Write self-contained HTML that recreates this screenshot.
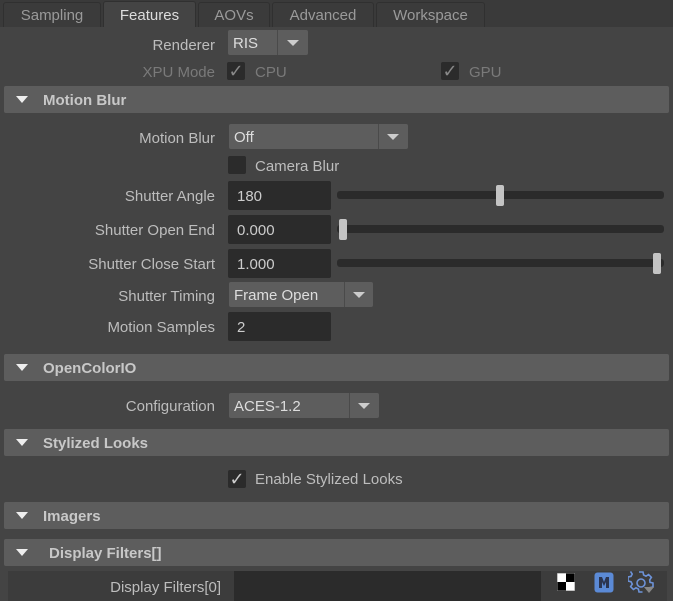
<!DOCTYPE html>
<html><head><style>
*{margin:0;padding:0;box-sizing:border-box}
body{width:673px;height:601px;background:#444;overflow:hidden;position:relative;font-family:"Liberation Sans",sans-serif;font-size:15px;color:#bdbdbd}
.a{position:absolute}
.tabbar{left:0;top:0;width:673px;height:27px;background:#3a3a3a}
.tab{position:absolute;top:2px;height:25px;background:#3b3b3b;border:1px solid #303030;border-bottom:none;border-radius:3px 3px 0 0;color:#9a9a9a;font-size:15px;text-align:center;line-height:26px}
.tab.on{background:#444;color:#ddd;top:1px;height:26px;line-height:28px}
.lbl{position:absolute;text-align:right;width:215px;left:0;line-height:18px}
.hdr{position:absolute;left:4px;width:665px;height:27px;background:#5d5d5d;border-radius:2px;font-weight:bold;color:#c8c8c8;line-height:29px;font-size:15px}
.hdr .t{position:absolute;left:12px;top:10px;width:0;height:0;border-left:6px solid transparent;border-right:6px solid transparent;border-top:7px solid #eee}
.hdr span{position:absolute;left:39px}
.dd{position:absolute;height:25px;background:#5d5d5d;border-radius:2px;line-height:27px;padding-left:5px;color:#ddd}
.dd .d{position:absolute;top:0;bottom:0;width:1px;background:#4a4a4a}
.dd .ar{position:absolute;top:10px;width:0;height:0;border-left:6px solid transparent;border-right:6px solid transparent;border-top:6px solid #ccc}
.fld{position:absolute;left:228px;width:103px;height:29px;background:#2b2b2b;border-radius:2px;line-height:32px;padding-left:9px;color:#ccc}
.cb{position:absolute;width:18px;height:18px;background:#2b2b2b;border-radius:2px;color:#ccc;font-size:18px;line-height:19px;text-align:center;font-family:"DejaVu Sans",sans-serif}
.trk{position:absolute;left:337px;width:327px;height:8px;background:#2b2b2b;border-radius:3px}
.hd{position:absolute;width:8px;height:21px;background:#c4c4c4;border-radius:2px}
</style></head><body>
<div class="a tabbar"></div>
<div class="tab" style="left:3px;width:98px">Sampling</div>
<div class="tab on" style="left:103px;width:93px">Features</div>
<div class="tab" style="left:198px;width:72px">AOVs</div>
<div class="tab" style="left:272px;width:102px">Advanced</div>
<div class="tab" style="left:376px;width:109px">Workspace</div>

<div class="lbl" style="top:37px">Renderer</div>
<div class="dd" style="left:228px;top:30px;width:80px">RIS<div class="d" style="left:49px"></div><div class="ar" style="left:59px"></div></div>
<div class="lbl" style="top:64px;color:#7a7a7a">XPU Mode</div>
<div class="cb" style="left:227px;top:62px;color:#888">✓</div><div class="a" style="left:255px;top:64px;color:#7a7a7a">CPU</div>
<div class="cb" style="left:441px;top:62px;color:#888">✓</div><div class="a" style="left:469px;top:64px;color:#7a7a7a">GPU</div>

<div class="hdr" style="top:86px"><div class="t"></div><span>Motion Blur</span></div>
<div class="lbl" style="top:130px">Motion Blur</div>
<div class="dd" style="left:229px;top:124px;width:179px">Off<div class="d" style="left:149px"></div><div class="ar" style="left:158px"></div></div>
<div class="cb" style="left:228px;top:156px"></div><div class="a" style="left:255px;top:158px">Camera Blur</div>
<div class="lbl" style="top:188px">Shutter Angle</div>
<div class="fld" style="top:181px">180</div><div class="trk" style="top:191px"></div><div class="hd" style="left:496px;top:185px"></div>
<div class="lbl" style="top:222px">Shutter Open End</div>
<div class="fld" style="top:215px">0.000</div><div class="trk" style="top:225px"></div><div class="hd" style="left:339px;top:219px"></div>
<div class="lbl" style="top:256px">Shutter Close Start</div>
<div class="fld" style="top:249px">1.000</div><div class="trk" style="top:259px"></div><div class="hd" style="left:653px;top:253px"></div>
<div class="lbl" style="top:288px">Shutter Timing</div>
<div class="dd" style="left:229px;top:282px;width:144px">Frame Open<div class="d" style="left:115px"></div><div class="ar" style="left:124px"></div></div>
<div class="lbl" style="top:319px">Motion Samples</div>
<div class="fld" style="top:312px">2</div>

<div class="hdr" style="top:354px"><div class="t"></div><span>OpenColorIO</span></div>
<div class="lbl" style="top:398px">Configuration</div>
<div class="dd" style="left:229px;top:393px;width:150px">ACES-1.2<div class="d" style="left:120px"></div><div class="ar" style="left:129px"></div></div>

<div class="hdr" style="top:429px"><div class="t"></div><span>Stylized Looks</span></div>
<div class="cb" style="left:228px;top:470px">✓</div><div class="a" style="left:255px;top:471px">Enable Stylized Looks</div>

<div class="hdr" style="top:502px"><div class="t"></div><span>Imagers</span></div>
<div class="hdr" style="top:539px"><div class="t"></div><span style="left:45px">Display Filters[]</span></div>
<div class="a" style="left:8px;top:571px;width:659px;height:30px;background:#3c3c3c"></div>
<div class="lbl" style="top:579px;width:221px">Display Filters[0]</div>
<div class="a" style="left:234px;top:571px;width:307px;height:30px;background:#2b2b2b"></div>
<svg class="a" style="left:557px;top:573px" width="18" height="18"><rect width="18" height="18" fill="#fff"/><rect x="9" y="0" width="9" height="9" fill="#000"/><rect x="0" y="9" width="9" height="9" fill="#000"/><rect x="0" y="0" width="18" height="18" fill="none" stroke="#888" stroke-width="1"/></svg>
<svg class="a" style="left:594px;top:572px" width="20" height="21"><rect x="0.5" y="0.5" width="19" height="20" rx="3" fill="#5b8ad6"/><path d="M5 16V5h3l2 5 2-5h3v11h-3V10l-2 4-2-4v6z" fill="#2b3550"/></svg>
<svg class="a" style="left:628px;top:570px" width="26" height="26" fill="none" stroke="#6d93d9" stroke-width="1.6"><path d="M11 2h4l.6 3 2.4 1.2 2.6-1.7 2.8 2.8-1.7 2.6L22 12.3l3 .7v4l-3 .6-1.2 2.4M14.5 22H11l-.6-3-2.4-1.2-2.6 1.7-2.8-2.8 1.7-2.6L3 11.7 0 11V7l3-.6 1.2-2.4L2.5 1.4"/><circle cx="13" cy="13" r="4"/></svg>
<div class="a" style="left:644px;top:587px;width:0;height:0;border-left:5px solid transparent;border-right:5px solid transparent;border-top:6px solid #888"></div>
</body></html>
